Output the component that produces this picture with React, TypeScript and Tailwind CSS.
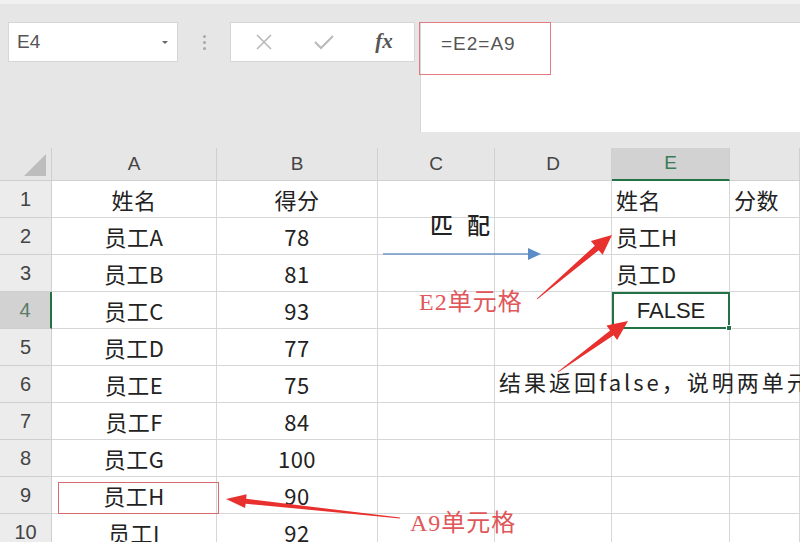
import React from 'react';

const COLS = ['A', 'B', 'C', 'D', 'E', 'F'];

const ROWS: string[][] = [
  ['姓名', '得分', '', '', '姓名', '分数'],
  ['员工A', '78', '', '', '员工H', ''],
  ['员工B', '81', '', '', '员工D', ''],
  ['员工C', '93', '', '', 'FALSE', ''],
  ['员工D', '77', '', '', '', ''],
  ['员工E', '75', '', '', '', ''],
  ['员工F', '84', '', '', '', ''],
  ['员工G', '100', '', '', '', ''],
  ['员工H', '90', '', '', '', ''],
  ['员工I', '92', '', '', '', ''],
];

const FONT = { fontFamily: '"Noto Sans CJK SC", "Noto Sans", sans-serif' };
const SERIF = { fontFamily: '"Liberation Serif", "Noto Sans CJK SC", serif' };
const LATIN = { fontFamily: '"Liberation Sans", sans-serif' };

// tapered arrow polygon from tail to tip
function arrowPoints(tx: number, ty: number, px: number, py: number, headLen = 20, headW = 9, shaft = 3) {
  const dx = px - tx;
  const dy = py - ty;
  const len = Math.hypot(dx, dy);
  const ux = dx / len;
  const uy = dy / len;
  const nx = -uy;
  const ny = ux;
  const bx = px - ux * headLen;
  const by = py - uy * headLen;
  const pts = [
    [tx + nx * 0.4, ty + ny * 0.4],
    [bx + nx * shaft, by + ny * shaft],
    [bx + nx * headW, by + ny * headW],
    [px, py],
    [bx - nx * headW, by - ny * headW],
    [bx - nx * shaft, by - ny * shaft],
    [tx - nx * 0.4, ty - ny * 0.4],
  ];
  return pts.map(p => p.map(v => v.toFixed(1)).join(',')).join(' ');
}

export default function App() {
  return (
    <div className="relative w-[800px] h-[542px] overflow-hidden bg-white" style={FONT}>
      {/* Toolbar */}
      <div className="bg-[#e6e6e6]">
        <div className="h-[4px] bg-[#f1f1f1]" />
        <div className="flex items-start pt-[18px] pb-[16px]">
          <div className="ml-[8px] w-[170px] h-[40px] bg-white border border-[#d6d6d6] flex items-center justify-between px-[8px]">
            <span className="text-[19px] text-[#555]" style={LATIN}>E4</span>
            <svg width="8" height="5" viewBox="0 0 8 5"><path d="M1 1 L7 1 L4 4 Z" fill="#666" /></svg>
          </div>
          <div className="w-[52px] h-[40px] flex flex-col items-center justify-center gap-[3px]">
            <div className="w-[3px] h-[3px] rounded-full bg-[#a8a8a8]" />
            <div className="w-[3px] h-[3px] rounded-full bg-[#a8a8a8]" />
            <div className="w-[3px] h-[3px] rounded-full bg-[#a8a8a8]" />
          </div>
          <div className="w-[185px] h-[40px] bg-white border border-[#d6d6d6] flex items-center">
            <div className="w-[60px] flex justify-center ml-[3px]">
              <svg width="20" height="20" viewBox="0 0 20 20"><path d="M3 3 L17 17 M17 3 L3 17" stroke="#b9b9b9" strokeWidth="1.6" /></svg>
            </div>
            <div className="w-[60px] flex justify-center">
              <svg width="22" height="18" viewBox="0 0 22 18"><path d="M2 9 L8 15 L20 3" stroke="#b9b9b9" strokeWidth="2" fill="none" /></svg>
            </div>
            <div className="w-[60px] flex justify-center">
              <span className="italic font-bold text-[21px] text-[#555]" style={SERIF}>fx</span>
            </div>
          </div>
          <div className="ml-[5px] flex-1 h-[110px] bg-white border-l border-t border-[#d6d6d6] pl-[20px] pt-[7px]">
            <span className="text-[19px] tracking-[1px] text-[#555]" style={LATIN}>=E2=A9</span>
          </div>
        </div>
      </div>

      {/* Grid */}
      <div className="grid grid-cols-[52px_165px_161px_117px_117px_118px_1fr]">
        <div className="h-[33px] bg-[#e6e6e6] border-r border-b border-[#cfcfcf] flex items-end justify-end pr-[5px] pb-[4px]">
          <svg width="22" height="22" viewBox="0 0 22 22"><path d="M22 0 L22 22 L0 22 Z" fill="#bdbdbd" /></svg>
        </div>
        {COLS.map(c => (
          <div
            key={c}
            className={
              c === 'E'
                ? 'h-[33px] bg-[#d2d2d2] border-r border-[#cfcfcf] border-b-2 border-b-[#217346] flex items-center justify-center text-[19px] text-[#3d7a57]'
                : 'h-[33px] bg-[#e6e6e6] border-r border-b border-[#d0d0d0] flex items-center justify-center text-[19px] text-[#444]'
            }
            style={LATIN}
          >
            {c === 'F' ? '' : c}
          </div>
        ))}
        {ROWS.map((row, r) => (
          <React.Fragment key={r}>
            <div
              className={
                r === 3
                  ? 'h-[37px] bg-[#d2d2d2] border-b border-[#cfcfcf] border-r-2 border-r-[#217346] flex items-center justify-center text-[20px] text-[#5c7a68]'
                  : 'h-[37px] bg-[#ececec] border-r border-b border-[#cfcfcf] flex items-center justify-center text-[20px] text-[#444]'
              }
              style={LATIN}
            >
              {r + 1}
            </div>
            {row.map((v, c) => {
              const isFalse = r === 3 && c === 4;
              const left = c >= 4 && !isFalse;
              return (
                <div
                  key={c}
                  className={
                    isFalse
                      ? 'relative h-[37px] border-2 border-[#217346] flex items-center justify-center text-[22px] text-[#222]'
                      : left
                        ? 'h-[37px] border-r border-b border-[#d6d6d6] flex items-center pl-[4px] text-[22px] tracking-[0.5px] text-[#222] whitespace-nowrap'
                        : 'h-[37px] border-r border-b border-[#d6d6d6] flex items-center justify-center text-[22px] tracking-[0.5px] text-[#222] whitespace-nowrap'
                  }
                  style={isFalse ? LATIN : undefined}
                >
                  {v}
                  {isFalse && <div className="absolute right-[-4px] bottom-[-4px] w-[6px] h-[6px] bg-[#217346] border border-white" />}
                </div>
              );
            })}
          </React.Fragment>
        ))}
      </div>

      {/* Annotations */}
      <div className="absolute left-[419px] top-[22px] w-[132px] h-[53px] border border-[#e27b7e]" />
      <div className="absolute left-[58px] top-[482px] w-[161px] h-[32px] border border-[#d46a6e]" />
      <div className="absolute left-[430px] top-[207px] text-[23px] text-[#222] font-medium tracking-[14px]">匹配</div>
      <div className="absolute left-[419px] top-[284px] text-[24px] tracking-[1px] text-[#e0575a]" style={SERIF}>E2单元格</div>
      <div className="absolute left-[410px] top-[505px] text-[24px] tracking-[1px] text-[#e0575a]" style={SERIF}>A9单元格</div>
      <div className="absolute left-[499px] top-[365px] text-[22px] tracking-[3px] text-[#222] whitespace-nowrap">结果返回false，说明两单元格不相等</div>

      <svg className="absolute left-0 top-0 pointer-events-none" width="800" height="542" viewBox="0 0 800 542">
        <line x1="383" y1="254" x2="530" y2="254" stroke="#6f96c6" strokeWidth="1.5" />
        <path d="M528 248 L541 254 L528 260 Z" fill="#5a8cc8" />
        <polygon points={arrowPoints(537, 299, 612, 235)} fill="#e8302f" />
        <polygon points={arrowPoints(558, 372, 628, 321)} fill="#e8302f" />
        <polygon points={arrowPoints(400, 518, 226, 499, 20, 7, 2.5)} fill="#e8302f" />
      </svg>
    </div>
  );
}
